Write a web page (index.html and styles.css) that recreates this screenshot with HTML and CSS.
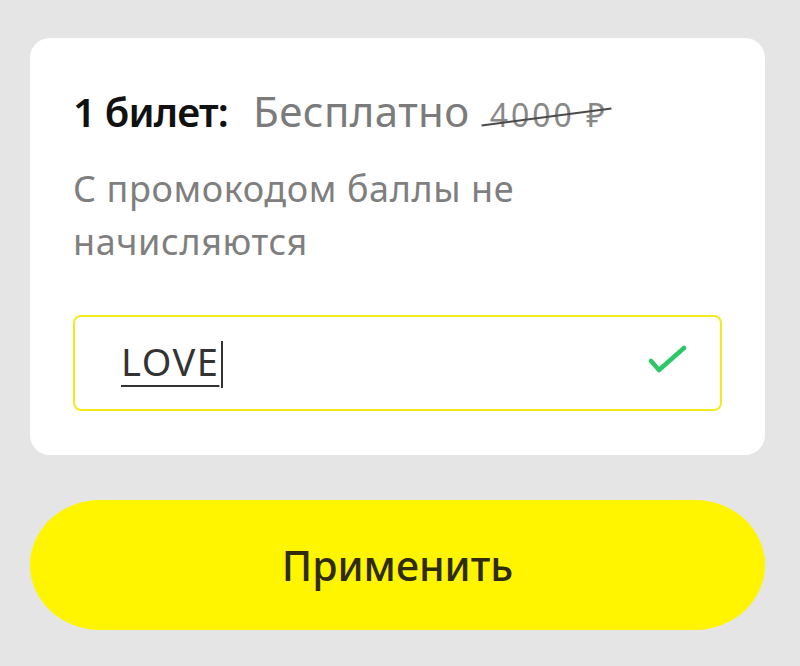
FILE: index.html
```html
<!DOCTYPE html>
<html lang="ru">
<head>
<meta charset="utf-8">
<link rel="stylesheet" href="styles.css">
</head>
<body>
<div class="page">
  <div class="card">
    <div class="price">
      <span class="count">1 билет:</span>
      <span class="free">Бесплатно</span>
      <span class="old">4000 ₽</span>
    </div>
    <p class="note">С промокодом баллы не начисляются</p>
    <div class="field">
      <span class="code"><span class="word">LOVE</span><span class="caret"></span></span>
      <svg class="check" width="40" height="32" viewBox="0 0 40 32"><path d="M4 17 L12 26 L37 4" fill="none" stroke="#2dc866" stroke-width="4.5" stroke-linecap="round" stroke-linejoin="round"/></svg>
    </div>
  </div>
  <button class="apply">Применить</button>
</div>
</body>
</html>
```

FILE: styles.css
```css
html, body {
  margin: 0;
  padding: 0;
  background: #e5e5e5;
  font-family: "Noto Sans", "Open Sans", sans-serif;
}
.page {
  padding: 38px 35px 0 30px;
  display: flex;
  flex-direction: column;
  gap: 45px;
}
.card {
  background: #fff;
  border-radius: 20px;
  padding: 50px 43px 0 43px;
  height: 417px;
  box-sizing: border-box;
}
.price {
  display: flex;
  align-items: baseline;
  height: 46px;
  font-size: 42px;
  line-height: 46px;
  white-space: nowrap;
}
.count {
  font-weight: 600;
  font-size: 40px;
  letter-spacing: -0.8px;
  color: #111;
  margin-right: 25px;
}
.free {
  color: #7b7b7b;
  letter-spacing: 0.4px;
  margin-right: 20px;
}
.old {
  position: relative;
  color: #888;
  font-size: 32px;
  letter-spacing: 3px;
}
.old::after {
  content: "";
  position: absolute;
  left: -9px;
  right: -4px;
  top: 52%;
  height: 2px;
  background: #4a4a4a;
  transform: rotate(-7.5deg);
}
.note {
  margin: 28px 0 0 0;
  font-size: 36px;
  line-height: 53px;
  letter-spacing: 0.6px;
  color: #7f7f7f;
  width: 500px;
}
.field {
  margin-top: 47px;
  height: 96px;
  border: 2px solid #f2ea1c;
  border-radius: 8px;
  box-sizing: border-box;
  display: flex;
  align-items: center;
  justify-content: space-between;
  padding: 0 33px 4px 46px;
}
.code {
  font-size: 38px;
  color: #333;
  display: inline-flex;
  align-items: baseline;
}
.word {
  letter-spacing: 1.5px;
  text-decoration: underline;
  text-decoration-thickness: 2px;
  text-underline-offset: 9px;
}
.caret {
  display: inline-block;
  width: 2px;
  height: 47px;
  background: #333;
  margin-left: 2px;
  align-self: flex-end;
  transform: translateY(1px);
}
.check {
  display: block;
  margin-top: -2px;
}
.apply {
  height: 130px;
  border: none;
  border-radius: 70px / 65px;
  background: #fff500;
  font-family: "Noto Sans", "Open Sans", sans-serif;
  font-size: 41px;
  font-weight: 500;
  color: #2e2c0c;
}
```
